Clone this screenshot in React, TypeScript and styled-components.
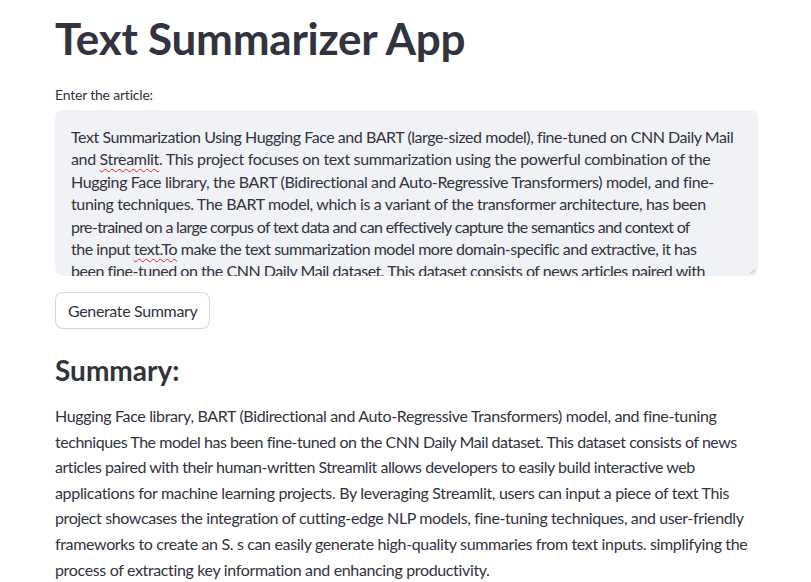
import React from "react";
import styled, { createGlobalStyle } from "styled-components";

const Global = createGlobalStyle`
  html, body { margin: 0; padding: 0; background: #ffffff; }
  body { font-family: "Lato", "Noto Sans", sans-serif; color: rgb(49, 51, 63); }
  * { box-sizing: border-box; }
`;

const Main = styled.main`
  width: 811px;
  padding: 12px 53px 0 55px;
  display: flex;
  flex-direction: column;
`;

const Title = styled.h1`
  margin: 0;
  font-size: 44px;
  font-weight: 700;
  line-height: 52px;
  letter-spacing: -0.25px;
  color: rgb(49, 51, 63);
`;

const Label = styled.label`
  margin-top: 21px;
  font-size: 14px;
  line-height: 20px;
  letter-spacing: -0.2px;
  color: rgb(49, 51, 63);
`;

const TextArea = styled.div`
  margin-top: 5px;
  height: 166px;
  width: 703px;
  background: rgb(240, 242, 246);
  border-radius: 8px;
  padding: 16px 16px 0 16px;
  overflow: hidden;
  position: relative;
  font-size: 16px;
  line-height: 22.4px;
`;

const Line = styled.span<{ $ls: number }>`
  display: block;
  white-space: nowrap;
  letter-spacing: ${(p) => p.$ls}px;
`;

const Misspelt = styled.span`
  text-decoration: underline wavy rgb(220, 40, 40);
  text-decoration-thickness: 1px;
  text-underline-offset: 3px;
`;

const Grip = styled.svg`
  position: absolute;
  right: 2px;
  bottom: 2px;
`;

const Button = styled.button`
  align-self: flex-start;
  margin-top: 16px;
  height: 37px;
  padding: 0 12px;
  background: #ffffff;
  border: 1px solid rgba(49, 51, 63, 0.2);
  border-radius: 8px;
  font-family: inherit;
  font-size: 16px;
  letter-spacing: -0.35px;
  color: rgb(49, 51, 63);
`;

const Heading = styled.h3`
  margin: 21px 0 0 0;
  font-size: 28px;
  font-weight: 700;
  line-height: 40px;
  color: rgb(49, 51, 63);
`;

const Summary = styled.p`
  margin: 13px 0 0 0;
  font-size: 16px;
  line-height: 25.6px;
`;

const articleLines: [React.ReactNode, number][] = [
  ["Text Summarization Using Hugging Face and BART (large-sized model), fine-tuned on CNN Daily Mail", -0.45],
  [<>and <Misspelt>Streamlit</Misspelt>. This project focuses on text summarization using the powerful combination of the</>, -0.34],
  ["Hugging Face library, the BART (Bidirectional and Auto-Regressive Transformers) model, and fine-", -0.37],
  ["tuning techniques. The BART model, which is a variant of the transformer architecture, has been", -0.37],
  ["pre-trained on a large corpus of text data and can effectively capture the semantics and context of", -0.68],
  [<>the input <Misspelt>text.To</Misspelt> make the text summarization model more domain-specific and extractive, it has</>, -0.5],
  ["been fine-tuned on the CNN Daily Mail dataset. This dataset consists of news articles paired with", -0.46],
];

const summaryLines: [string, number][] = [
  ["Hugging Face library, BART (Bidirectional and Auto-Regressive Transformers) model, and fine-tuning", -0.35],
  ["techniques The model has been fine-tuned on the CNN Daily Mail dataset. This dataset consists of news", -0.46],
  ["articles paired with their human-written Streamlit allows developers to easily build interactive web", -0.46],
  ["applications for machine learning projects. By leveraging Streamlit, users can input a piece of text This", -0.33],
  ["project showcases the integration of cutting-edge NLP models, fine-tuning techniques, and user-friendly", -0.39],
  ["frameworks to create an S. s can easily generate high-quality summaries from text inputs. simplifying the", -0.35],
  ["process of extracting key information and enhancing productivity.", -0.35],
];

export default function App() {
  return (
    <>
      <Global />
      <Main>
        <Title>Text Summarizer App</Title>
        <Label>Enter the article:</Label>
        <TextArea>
          {articleLines.map(([l, ls], i) => (
            <Line key={i} $ls={ls}>{l}</Line>
          ))}
          <Grip width="6" height="6" viewBox="0 0 6 6">
            <path d="M5.5 0.5 L0.5 5.5 M5.5 3 L3 5.5" stroke="#b0b3bb" strokeWidth="0.8" fill="none" />
          </Grip>
        </TextArea>
        <Button>Generate Summary</Button>
        <Heading>Summary:</Heading>
        <Summary>
          {summaryLines.map(([l, ls], i) => (
            <Line key={i} $ls={ls}>{l}</Line>
          ))}
        </Summary>
      </Main>
    </>
  );
}
